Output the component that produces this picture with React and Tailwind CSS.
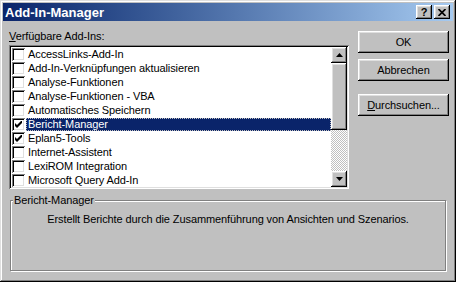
import React from 'react'

const raised = 'shadow-[inset_-1px_-1px_#000,inset_1px_1px_#fff,inset_-2px_-2px_#808080,inset_2px_2px_#dfdfdf]'
const sunken = 'shadow-[inset_1px_1px_#808080,inset_-1px_-1px_#fff,inset_2px_2px_#000,inset_-2px_-2px_#dfdfdf]'

const addIns = [
  { name: 'AccessLinks-Add-In' },
  { name: 'Add-In-Verknüpfungen aktualisieren' },
  { name: 'Analyse-Funktionen' },
  { name: 'Analyse-Funktionen - VBA' },
  { name: 'Automatisches Speichern' },
  { name: 'Bericht-Manager', checked: true, selected: true },
  { name: 'Eplan5-Tools', checked: true },
  { name: 'Internet-Assistent' },
  { name: 'LexiROM Integration' },
  { name: 'Microsoft Query Add-In' },
]

function Checkbox({ checked }) {
  return (
    <div className={`w-[13px] h-[13px] shrink-0 bg-white flex items-center justify-center ${sunken}`}>
      {checked && (
        <svg width="7" height="7" viewBox="0 0 7 7">
          <path d="M0 2 L2 4 L6 0 L7 0 L7 2 L2 7 L0 5 Z" fill="#000" />
        </svg>
      )}
    </div>
  )
}

function Arrow({ down }) {
  return (
    <svg width="7" height="4" viewBox="0 0 7 4">
      <polygon points={down ? '0,0 7,0 3.5,4' : '0,4 7,4 3.5,0'} fill="#000" />
    </svg>
  )
}

function Button({ children, className = '' }) {
  return (
    <button className={`w-[91px] h-[22px] flex items-center justify-center bg-[#c0c0c0] text-black ${raised} ${className}`}>
      {children}
    </button>
  )
}

export default function App() {
  return (
    <div className="w-[456px] h-[282px] p-[3px] flex flex-col bg-[#c0c0c0] text-[11px] tracking-[-0.1px] text-black font-['Liberation_Sans',Arial,sans-serif] shadow-[inset_-1px_-1px_#000,inset_1px_1px_#dfdfdf,inset_-2px_-2px_#808080,inset_2px_2px_#fff]">
      {/* title bar */}
      <div className="h-[18px] shrink-0 flex items-center pl-[2px] pr-[3px] bg-linear-to-r from-[#0a246a] to-[#a6caf0]">
        <span className="text-white font-bold text-[13px] tracking-normal leading-none">Add-In-Manager</span>
        <div className="ml-auto flex gap-[2px]">
          <div className={`w-[16px] h-[14px] flex items-center justify-center bg-[#c0c0c0] font-bold text-[11px] leading-none ${raised}`}>?</div>
          <div className={`w-[16px] h-[14px] flex items-center justify-center bg-[#c0c0c0] ${raised}`}>
            <svg width="8" height="7" viewBox="0 0 8 7">
              <path d="M0.5 0 L7.5 7 M7.5 0 L0.5 7" stroke="#000" strokeWidth="1.7" />
            </svg>
          </div>
        </div>
      </div>

      <div className="flex-1 flex flex-col pt-[9px] pl-[6px] pr-[4px]">
        <div className="flex">
          {/* list */}
          <div className="flex flex-col">
            <div className="h-[13px] leading-[13px]">
              <span className="underline">V</span>erfügbare Add-Ins:
            </div>
            <div className={`mt-[2px] w-[340px] h-[144px] p-[2px] flex bg-white ${sunken}`}>
              <div className="flex-1 flex flex-col">
                {addIns.map(a => (
                  <div key={a.name} className="h-[14px] flex items-center pl-[1px]">
                    <Checkbox checked={a.checked} />
                    <div
                      className={`ml-[1px] flex-1 h-[13px] leading-[13px] pl-[2px] whitespace-nowrap ${
                        a.selected ? 'bg-[#0a246a] text-white outline-1 outline-dotted outline-[#c0c0c0] -outline-offset-1' : ''
                      }`}
                    >
                      {a.name}
                    </div>
                  </div>
                ))}
              </div>
              <div className="w-[16px] flex flex-col">
                <div className={`h-[16px] flex items-center justify-center bg-[#c0c0c0] ${raised}`}>
                  <Arrow />
                </div>
                <div className={`h-[67px] bg-[#c0c0c0] ${raised}`} />
                <div className="flex-1 bg-[repeating-conic-gradient(#c0c0c0_0_25%,#fff_0_50%)] bg-[length:2px_2px]" />
                <div className={`h-[16px] flex items-center justify-center bg-[#c0c0c0] ${raised}`}>
                  <Arrow down />
                </div>
              </div>
            </div>
          </div>

          {/* buttons */}
          <div className="ml-auto flex flex-col">
            <Button className="mt-[1px]">OK</Button>
            <Button className="mt-[6px]">Abbrechen</Button>
            <Button className="mt-[13px]">
              <span><span className="underline">D</span>urchsuchen...</span>
            </Button>
          </div>
        </div>

        {/* description */}
        <fieldset className="mt-[5px] ml-[1px] w-[436px] h-[77px] border border-[#808080] shadow-[inset_1px_1px_#fff,1px_1px_#fff]">
          <legend className="ml-[2px] px-[1px] h-[13px] leading-[13px] bg-[#c0c0c0]">Bericht-Manager</legend>
          <div className="mt-[6px] h-[13px] leading-[13px] text-center">
            Erstellt Berichte durch die Zusammenführung von Ansichten und Szenarios.
          </div>
        </fieldset>
      </div>
    </div>
  )
}
